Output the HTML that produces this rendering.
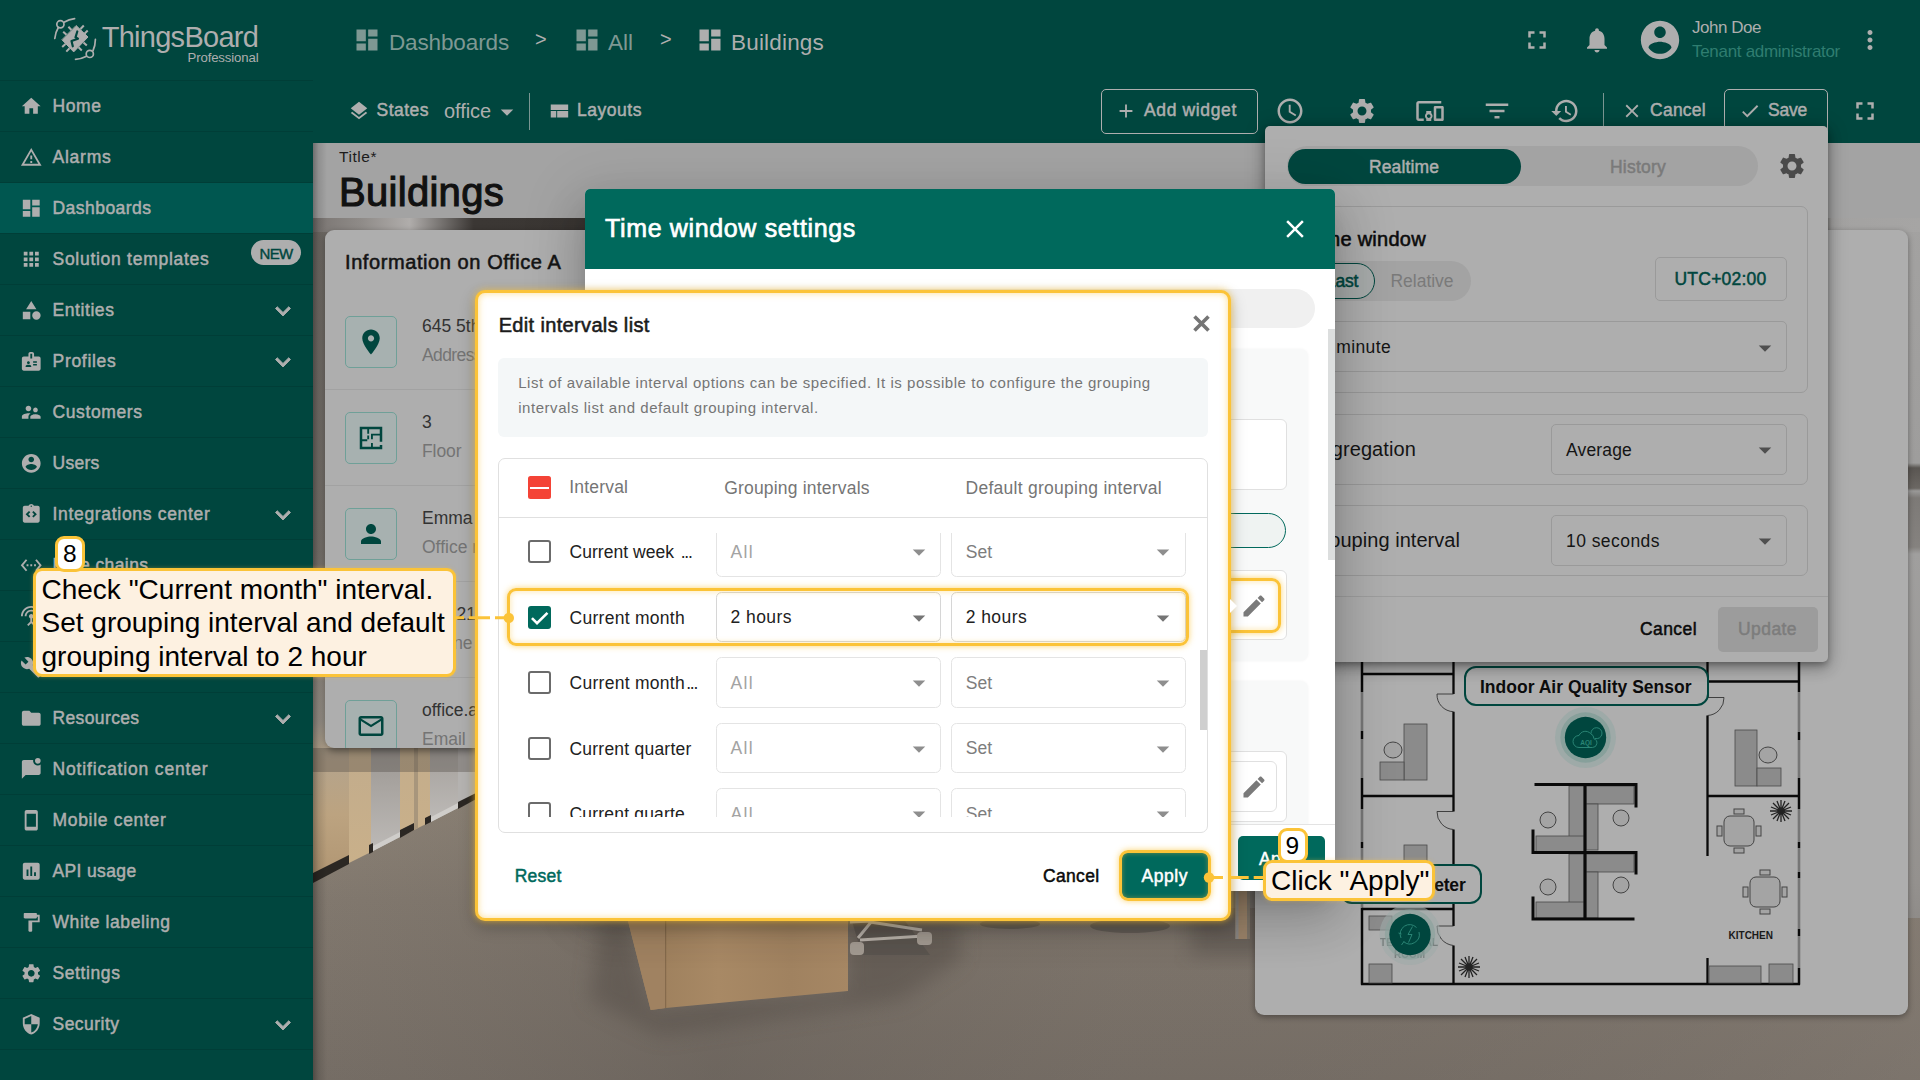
<!DOCTYPE html>
<html lang="en"><head><meta charset="utf-8"><title>Buildings</title>
<style>
*{box-sizing:border-box}
html,body{margin:0;padding:0}
body{width:1920px;height:1080px;overflow:hidden;position:relative;background:#00463e;font-family:"Liberation Sans",sans-serif;color:#aeaeae}
.abs{position:absolute}
.m{-webkit-text-stroke:.45px currentColor}
.t{position:absolute;white-space:nowrap;line-height:1;transform-origin:0 50%}
svg{display:block}
/* sidebar */
#side{position:absolute;left:0;top:0;width:313px;height:1080px;background:#00463e}
.mi{position:absolute;left:0;width:313px;height:51px;border-top:1px solid #003e37}
.mi svg{position:absolute;left:19px;top:13px;width:25px;height:25px;fill:#aeaeae}
.mi span{position:absolute;left:52.500px;top:15px;font-size:17.500px;line-height:20px;letter-spacing:.35px;white-space:nowrap;color:#aeaeae;-webkit-text-stroke:.4px #aeaeae}
.mi svg.ch{left:auto;right:17px;top:10px;width:30px;height:30px}
.mi.act{background:#005750}
/* top */
#top{position:absolute;left:313px;top:0;width:1607px;height:143px;background:#00463e}
.bc{position:absolute;top:30.500px;font-size:22.500px;line-height:24px;color:#8fa9a5;white-space:nowrap}
.ic{position:absolute;fill:#aeaeae}
.tb{position:absolute;font-size:17.500px;line-height:20px;letter-spacing:.4px;white-space:nowrap;color:#aeaeae;-webkit-text-stroke:.4px #aeaeae}
</style></head><body>

<div id="side">
<svg class="abs" style="left:45px;top:8px;width:70px;height:64px" viewBox="45 8 70 64" fill="none" stroke="#aeaeae" stroke-width="1.700" stroke-linecap="round">
<circle cx="60.400" cy="24.300" r="3.600"/><circle cx="89.800" cy="53.900" r="3.600"/>
<path d="M64 22.200Q69 19.400 74.600 18.700"/><path d="M58.300 27.500Q55.300 32.500 54.800 38.500"/>
<path d="M93 50.600Q95.300 45.500 95.400 39.400"/><path d="M86.600 56.300Q81.500 59 75.500 59.300"/>
<polygon points="76.400,25.800 88,37 73.700,51.900 62.200,40" fill="#aeaeae" stroke="#aeaeae" stroke-width="1" stroke-linejoin="round"/>
<g stroke-width="2" stroke-linecap="butt"><path d="M68.400 26.700L71.500 30M63.200 31.700L66.500 34.800M83.800 25.500L80.500 29M87.700 30.500L84.500 33.700M62.200 47.100L65.500 44M66.300 51.600L69.500 48.300M86.800 45.600L83.500 42.500M81.800 50.400L78.500 47.300"/></g>
<path d="M77.300 31.500L75.500 37.300L78 38.800L71.500 41L72.800 46.300" stroke="#00463e" stroke-width="2.200" stroke-linejoin="round"/>
</svg>
<span id="t1" class="t" style="left:101.7px;top:20.43px;font-size:29px;line-height:34.8px;color:#aeaeae;letter-spacing:-0.722px;">ThingsBoard</span>
<span id="t2" class="t" style="left:187.5px;top:50.33px;font-size:13.2px;line-height:15.84px;color:#aeaeae;letter-spacing:-0.132px;">Professional</span>
<div class="mi" style="top:80px"></div>
<svg class="ic" style="left:20px;top:94.7px;width:22.5px;height:22.5px;fill:#aeaeae;" viewBox="0 0 24 24"><path d="M10 20v-6h4v6h5v-8h3L12 3 2 12h3v8z"/></svg>
<span id="t3" class="t" style="left:52.5px;top:96.1px;font-size:17.5px;line-height:21.0px;color:#aeaeae;letter-spacing:0.578px;-webkit-text-stroke:0.49px #aeaeae;">Home</span>
<div class="mi" style="top:131px"></div>
<svg class="ic" style="left:20px;top:145.7px;width:22.5px;height:22.5px;fill:#aeaeae;" viewBox="0 0 24 24"><path d="M12 5.990L19.530 19H4.470L12 5.990M12 2L1 21h22L12 2zm1 14h-2v2h2v-2zm0-6h-2v4h2v-4z"/></svg>
<span id="t4" class="t" style="left:52.5px;top:147.1px;font-size:17.5px;line-height:21.0px;color:#aeaeae;letter-spacing:0.758px;-webkit-text-stroke:0.49px #aeaeae;">Alarms</span>
<div class="mi act" style="top:182px"></div>
<svg class="ic" style="left:20px;top:196.7px;width:22.5px;height:22.5px;fill:#aeaeae;" viewBox="0 0 24 24"><path d="M3 13h8V3H3v10zm0 8h8v-6H3v6zm10 0h8V11h-8v10zm0-18v6h8V3h-8z"/></svg>
<span id="t5" class="t" style="left:52.5px;top:198.1px;font-size:17.5px;line-height:21.0px;color:#aeaeae;letter-spacing:0.463px;-webkit-text-stroke:0.49px #aeaeae;">Dashboards</span>
<div class="mi" style="top:233px"></div>
<svg class="ic" style="left:20px;top:247.7px;width:22.5px;height:22.5px;fill:#aeaeae;" viewBox="0 0 24 24"><path d="M4 8h4V4H4v4zm6 12h4v-4h-4v4zm-6 0h4v-4H4v4zm0-6h4v-4H4v4zm6 0h4v-4h-4v4zm6-10v4h4V4h-4zm-6 4h4V4h-4v4zm6 6h4v-4h-4v4zm0 6h4v-4h-4v4z"/></svg>
<span id="t6" class="t" style="left:52.5px;top:249.1px;font-size:17.5px;line-height:21.0px;color:#aeaeae;letter-spacing:0.723px;-webkit-text-stroke:0.49px #aeaeae;">Solution templates</span>
<div class="mi" style="top:284px"></div>
<svg class="ic" style="left:20px;top:298.7px;width:22.5px;height:22.5px;fill:#aeaeae;" viewBox="0 0 24 24"><path d="M12 2l-5.500 9h11zM17.500 13a4.500 4.500 0 1 0 0 9a4.500 4.500 0 1 0 0-9zM3 13.500h8v8H3z"/></svg>
<span id="t7" class="t" style="left:52.5px;top:300.1px;font-size:17.5px;line-height:21.0px;color:#aeaeae;letter-spacing:0.576px;-webkit-text-stroke:0.49px #aeaeae;">Entities</span>
<svg class="ic" style="left:268px;top:295.5px;width:30px;height:30px;fill:#aeaeae;stroke:#aeaeae;stroke-width:.7px;" viewBox="0 0 24 24"><path d="M16.590 8.590L12 13.170 7.410 8.590 6 10l6 6 6-6z"/></svg>
<div class="mi" style="top:335px"></div>
<svg class="ic" style="left:20px;top:349.7px;width:22.5px;height:22.5px;fill:#aeaeae;" viewBox="0 0 24 24"><path d="M20 7h-5V4c0-1.100-.9-2-2-2h-2c-1.100 0-2 .9-2 2v3H4c-1.100 0-2 .9-2 2v11c0 1.100.9 2 2 2h16c1.100 0 2-.9 2-2V9c0-1.100-.9-2-2-2zM9 12c.830 0 1.500.670 1.500 1.500S9.830 15 9 15s-1.500-.670-1.500-1.500S8.170 12 9 12zm3 6H6v-.750c0-1 2-1.500 3-1.500s3 .5 3 1.500V18zm1-9h-2V4h2v5zm5 7.500h-4V15h4v1.500zm0-3h-4V12h4v1.500z"/></svg>
<span id="t8" class="t" style="left:52.5px;top:351.1px;font-size:17.5px;line-height:21.0px;color:#aeaeae;letter-spacing:0.705px;-webkit-text-stroke:0.49px #aeaeae;">Profiles</span>
<svg class="ic" style="left:268px;top:346.5px;width:30px;height:30px;fill:#aeaeae;stroke:#aeaeae;stroke-width:.7px;" viewBox="0 0 24 24"><path d="M16.590 8.590L12 13.170 7.410 8.590 6 10l6 6 6-6z"/></svg>
<div class="mi" style="top:386px"></div>
<svg class="ic" style="left:20px;top:400.7px;width:22.5px;height:22.5px;fill:#aeaeae;" viewBox="0 0 24 24"><path d="M16.500 12c1.380 0 2.490-1.120 2.490-2.500S17.880 7 16.500 7C15.120 7 14 8.120 14 9.500s1.120 2.500 2.500 2.500zM9 11c1.660 0 2.990-1.340 2.990-3S10.660 5 9 5C7.340 5 6 6.340 6 8s1.340 3 3 3zm7.500 3c-1.830 0-5.500.920-5.500 2.750V19h11v-2.250c0-1.830-3.670-2.750-5.500-2.750zM9 13c-2.330 0-7 1.170-7 3.500V19h7v-2.250c0-.850.330-2.340 2.370-3.470C10.500 13.100 9.660 13 9 13z"/></svg>
<span id="t9" class="t" style="left:52.5px;top:402.1px;font-size:17.5px;line-height:21.0px;color:#aeaeae;letter-spacing:0.599px;-webkit-text-stroke:0.49px #aeaeae;">Customers</span>
<div class="mi" style="top:437px"></div>
<svg class="ic" style="left:20px;top:451.7px;width:22.5px;height:22.5px;fill:#aeaeae;" viewBox="0 0 24 24"><path d="M12 2C6.480 2 2 6.480 2 12s4.480 10 10 10 10-4.480 10-10S17.520 2 12 2zm0 3c1.660 0 3 1.340 3 3s-1.340 3-3 3-3-1.340-3-3 1.340-3 3-3zm0 14.200c-2.500 0-4.710-1.280-6-3.220.030-1.990 4-3.080 6-3.080 1.990 0 5.970 1.090 6 3.080-1.290 1.940-3.500 3.220-6 3.220z"/></svg>
<span id="t10" class="t" style="left:52.5px;top:453.1px;font-size:17.5px;line-height:21.0px;color:#aeaeae;letter-spacing:0.259px;-webkit-text-stroke:0.49px #aeaeae;">Users</span>
<div class="mi" style="top:488px"></div>
<svg class="ic" style="left:20px;top:502.7px;width:22.5px;height:22.5px;fill:#aeaeae;" viewBox="0 0 24 24"><path d="M19 3h-4.180C14.400 1.840 13.300 1 12 1s-2.400.840-2.820 2H5c-1.100 0-2 .9-2 2v14c0 1.100.9 2 2 2h14c1.100 0 2-.9 2-2V5c0-1.100-.9-2-2-2zm-8 11.170l-1.410 1.420L6 12l3.590-3.590L11 9.830 8.830 12 11 14.170zm1-9.920c-.410 0-.750-.340-.750-.750s.340-.750.750-.750.750.340.750.750-.340.750-.750.750zm2.410 11.340L13 14.170 15.170 12 13 9.830l1.410-1.420L18 12l-3.590 3.590z"/></svg>
<span id="t11" class="t" style="left:52.5px;top:504.1px;font-size:17.5px;line-height:21.0px;color:#aeaeae;letter-spacing:0.687px;-webkit-text-stroke:0.49px #aeaeae;">Integrations center</span>
<svg class="ic" style="left:268px;top:499.5px;width:30px;height:30px;fill:#aeaeae;stroke:#aeaeae;stroke-width:.7px;" viewBox="0 0 24 24"><path d="M16.590 8.590L12 13.170 7.410 8.590 6 10l6 6 6-6z"/></svg>
<div class="mi" style="top:539px"></div>
<svg class="ic" style="left:20px;top:553.7px;width:22.5px;height:22.5px;fill:#aeaeae;" viewBox="0 0 24 24"><path d="M7.770 6.760L6.230 5.480.820 12l5.410 6.520 1.540-1.280L3.420 12l4.350-5.240zM7 13h2v-2H7v2zm10-2h-2v2h2v-2zm-6 2h2v-2h-2v2zm6.770-7.520l-1.540 1.280L20.580 12l-4.350 5.240 1.540 1.280L23.180 12l-5.410-6.520z"/></svg>
<span id="t12" class="t" style="left:52.5px;top:555.1px;font-size:17.5px;line-height:21.0px;color:#aeaeae;letter-spacing:0.413px;-webkit-text-stroke:0.49px #aeaeae;">Rule chains</span>
<div class="mi" style="top:590px"></div>
<svg class="ic" style="left:20px;top:604.7px;width:22.5px;height:22.5px;fill:#aeaeae;" viewBox="0 0 24 24"><path d="M12 5c-3.870 0-7 3.130-7 7h2c0-2.760 2.240-5 5-5s5 2.240 5 5h2c0-3.870-3.130-7-7-7zm1 9.290c.880-.390 1.500-1.260 1.500-2.290 0-1.380-1.120-2.500-2.500-2.500S9.500 10.620 9.500 12c0 1.020.620 1.900 1.500 2.290v3.300L7.590 21 9 22.410l3-3 3 3L16.410 21 13 17.590v-3.300zM12 1C5.930 1 1 5.930 1 12h2c0-4.970 4.030-9 9-9s9 4.030 9 9h2c0-6.070-4.930-11-11-11z"/></svg>
<span id="t13" class="t" style="left:52.5px;top:606.1px;font-size:17.5px;line-height:21.0px;color:#aeaeae;letter-spacing:-0.526px;-webkit-text-stroke:0.49px #aeaeae;">Edge management</span>
<svg class="ic" style="left:268px;top:601.5px;width:30px;height:30px;fill:#aeaeae;stroke:#aeaeae;stroke-width:.7px;" viewBox="0 0 24 24"><path d="M16.590 8.590L12 13.170 7.410 8.590 6 10l6 6 6-6z"/></svg>
<div class="mi" style="top:641px"></div>
<svg class="ic" style="left:20px;top:655.7px;width:22.5px;height:22.5px;fill:#aeaeae;" viewBox="0 0 24 24"><path d="M22.700 19l-9.100-9.100c.9-2.300.4-5-1.500-6.900-2-2-5-2.400-7.400-1.300L9 6 6 9 1.600 4.700C.4 7.100.9 10.100 2.900 12.100c1.900 1.900 4.600 2.400 6.900 1.500l9.100 9.100c.4.400 1 .4 1.400 0l2.300-2.300c.5-.4.500-1.100.1-1.400z"/></svg>
<span id="t14" class="t" style="left:52.5px;top:657.1px;font-size:17.5px;line-height:21.0px;color:#aeaeae;letter-spacing:0.239px;-webkit-text-stroke:0.49px #aeaeae;">Advanced features</span>
<svg class="ic" style="left:268px;top:652.5px;width:30px;height:30px;fill:#aeaeae;stroke:#aeaeae;stroke-width:.7px;" viewBox="0 0 24 24"><path d="M16.590 8.590L12 13.170 7.410 8.590 6 10l6 6 6-6z"/></svg>
<div class="mi" style="top:692px"></div>
<svg class="ic" style="left:20px;top:706.7px;width:22.5px;height:22.5px;fill:#aeaeae;" viewBox="0 0 24 24"><path d="M10 4H4c-1.100 0-1.990.9-1.990 2L2 18c0 1.100.9 2 2 2h16c1.100 0 2-.9 2-2V8c0-1.100-.9-2-2-2h-8l-2-2z"/></svg>
<span id="t15" class="t" style="left:52.5px;top:708.1px;font-size:17.5px;line-height:21.0px;color:#aeaeae;letter-spacing:0.372px;-webkit-text-stroke:0.49px #aeaeae;">Resources</span>
<svg class="ic" style="left:268px;top:703.5px;width:30px;height:30px;fill:#aeaeae;stroke:#aeaeae;stroke-width:.7px;" viewBox="0 0 24 24"><path d="M16.590 8.590L12 13.170 7.410 8.590 6 10l6 6 6-6z"/></svg>
<div class="mi" style="top:743px"></div>
<svg class="ic" style="left:20px;top:757.7px;width:22.5px;height:22.5px;fill:#aeaeae;" viewBox="0 0 24 24"><path d="M22 6.980V16c0 1.100-.9 2-2 2H6l-4 4V4c0-1.100.9-2 2-2h10.100c-.060.320-.100.660-.100 1 0 2.760 2.240 5 5 5 1.130 0 2.160-.390 3-1.020zM16 3a3 3 0 1 0 6 0a3 3 0 1 0-6 0z"/></svg>
<span id="t16" class="t" style="left:52.5px;top:759.1px;font-size:17.5px;line-height:21.0px;color:#aeaeae;letter-spacing:0.838px;-webkit-text-stroke:0.49px #aeaeae;">Notification center</span>
<div class="mi" style="top:794px"></div>
<svg class="ic" style="left:20px;top:808.7px;width:22.5px;height:22.5px;fill:#aeaeae;" viewBox="0 0 24 24"><path d="M17 1.010L7 1c-1.100 0-2 .9-2 2v18c0 1.100.9 2 2 2h10c1.100 0 2-.9 2-2V3c0-1.100-.9-1.990-2-1.990zM17 19H7V5h10v14z"/></svg>
<span id="t17" class="t" style="left:52.5px;top:810.1px;font-size:17.5px;line-height:21.0px;color:#aeaeae;letter-spacing:0.688px;-webkit-text-stroke:0.49px #aeaeae;">Mobile center</span>
<div class="mi" style="top:845px"></div>
<svg class="ic" style="left:20px;top:859.7px;width:22.5px;height:22.5px;fill:#aeaeae;" viewBox="0 0 24 24"><path d="M19 3H5c-1.100 0-2 .9-2 2v14c0 1.100.9 2 2 2h14c1.100 0 2-.9 2-2V5c0-1.100-.9-2-2-2zM9 17H7v-7h2v7zm4 0h-2V7h2v10zm4 0h-2v-4h2v4z"/></svg>
<span id="t18" class="t" style="left:52.5px;top:861.1px;font-size:17.5px;line-height:21.0px;color:#aeaeae;letter-spacing:0.361px;-webkit-text-stroke:0.49px #aeaeae;">API usage</span>
<div class="mi" style="top:896px"></div>
<svg class="ic" style="left:20px;top:910.7px;width:22.5px;height:22.5px;fill:#aeaeae;" viewBox="0 0 24 24"><path d="M18 4V3c0-.550-.450-1-1-1H5c-.550 0-1 .450-1 1v4c0 .550.450 1 1 1h12c.550 0 1-.450 1-1V6h1v4H9v11c0 .550.450 1 1 1h2c.550 0 1-.450 1-1v-9h8V4h-3z"/></svg>
<span id="t19" class="t" style="left:52.5px;top:912.1px;font-size:17.5px;line-height:21.0px;color:#aeaeae;letter-spacing:0.577px;-webkit-text-stroke:0.49px #aeaeae;">White labeling</span>
<div class="mi" style="top:947px"></div>
<svg class="ic" style="left:20px;top:961.7px;width:22.5px;height:22.5px;fill:#aeaeae;" viewBox="0 0 24 24"><path d="M19.140 12.940c.040-.300.060-.610.060-.940 0-.320-.020-.640-.070-.940l2.030-1.580c.180-.140.230-.410.120-.610l-1.920-3.320c-.120-.220-.370-.290-.590-.220l-2.390.960c-.500-.380-1.030-.700-1.620-.940l-.360-2.540c-.040-.240-.240-.410-.480-.410h-3.840c-.240 0-.430.170-.470.410l-.360 2.540c-.590.240-1.130.570-1.620.940l-2.390-.960c-.220-.080-.470 0-.590.220L2.740 8.870c-.120.210-.080.470.120.610l2.030 1.580c-.050.300-.090.630-.090.940s.020.640.070.940l-2.030 1.580c-.180.140-.230.410-.120.610l1.920 3.320c.120.220.370.290.590.220l2.390-.960c.500.380 1.030.700 1.620.940l.360 2.540c.050.240.240.410.480.410h3.840c.240 0 .440-.170.470-.410l.360-2.540c.590-.240 1.130-.560 1.620-.940l2.390.960c.220.080.470 0 .590-.220l1.920-3.320c.120-.220.070-.470-.120-.610l-2.010-1.580zM12 15.600c-1.980 0-3.600-1.620-3.600-3.600s1.620-3.600 3.600-3.600 3.600 1.620 3.600 3.600-1.620 3.600-3.600 3.600z"/></svg>
<span id="t20" class="t" style="left:52.5px;top:963.1px;font-size:17.5px;line-height:21.0px;color:#aeaeae;letter-spacing:0.596px;-webkit-text-stroke:0.49px #aeaeae;">Settings</span>
<div class="mi" style="top:998px"></div>
<svg class="ic" style="left:20px;top:1012.7px;width:22.5px;height:22.5px;fill:#aeaeae;" viewBox="0 0 24 24"><path d="M12 1L3 5v6c0 5.550 3.840 10.740 9 12 5.160-1.260 9-6.450 9-12V5l-9-4zm0 10.990h7c-.530 4.120-3.280 7.790-7 8.940V12H5V6.300l7-3.110v8.800z"/></svg>
<span id="t21" class="t" style="left:52.5px;top:1014.1px;font-size:17.5px;line-height:21.0px;color:#aeaeae;letter-spacing:0.473px;-webkit-text-stroke:0.49px #aeaeae;">Security</span>
<svg class="ic" style="left:268px;top:1009.5px;width:30px;height:30px;fill:#aeaeae;stroke:#aeaeae;stroke-width:.7px;" viewBox="0 0 24 24"><path d="M16.590 8.590L12 13.170 7.410 8.590 6 10l6 6 6-6z"/></svg>
<div class="abs" style="left:0;top:1049px;width:313px;height:1px;background:#003e37"></div>
<div class="abs" style="left:251px;top:239.500px;width:50px;height:25.500px;border-radius:13px;background:#aeaeae"></div>
<span id="t22" class="t" style="left:259.5px;top:244.57px;font-size:15px;line-height:18.0px;color:#00463e;letter-spacing:-0.667px;-webkit-text-stroke:0.42px #00463e;">NEW</span>
</div>
<div id="top"></div>
<svg class="ic" style="left:353px;top:25.5px;width:28px;height:28px;fill:#7e9893;" viewBox="0 0 24 24"><path d="M3 13h8V3H3v10zm0 8h8v-6H3v6zm10 0h8V11h-8v10zm0-18v6h8V3h-8z"/></svg>
<span id="t23" class="t" style="left:389px;top:28.96px;font-size:22.5px;line-height:27.0px;color:#7e9893;letter-spacing:-0.133px;">Dashboards</span>
<span id="t24" class="t" style="left:535px;top:26.93px;font-size:20px;line-height:24.0px;color:#aeaeae;">&gt;</span>
<svg class="ic" style="left:572.5px;top:25.5px;width:28px;height:28px;fill:#7e9893;" viewBox="0 0 24 24"><path d="M3 13h8V3H3v10zm0 8h8v-6H3v6zm10 0h8V11h-8v10zm0-18v6h8V3h-8z"/></svg>
<span id="t25" class="t" style="left:608px;top:28.96px;font-size:22.5px;line-height:27.0px;color:#7e9893;letter-spacing:-0.005px;">All</span>
<span id="t26" class="t" style="left:660px;top:26.93px;font-size:20px;line-height:24.0px;color:#aeaeae;">&gt;</span>
<svg class="ic" style="left:696px;top:25.5px;width:28px;height:28px;fill:#aeaeae;" viewBox="0 0 24 24"><path d="M3 13h8V3H3v10zm0 8h8v-6H3v6zm10 0h8V11h-8v10zm0-18v6h8V3h-8z"/></svg>
<span id="t27" class="t" style="left:731px;top:28.96px;font-size:22.5px;line-height:27.0px;color:#aeaeae;letter-spacing:0.188px;">Buildings</span>
<svg class="ic" style="left:1522px;top:25px;width:30px;height:30px;fill:#aeaeae;" viewBox="0 0 24 24"><path d="M7 14H5v5h5v-2H7v-3zm-2-4h2V7h3V5H5v5zm12 7h-3v2h5v-5h-2v3zM14 5v2h3v3h2V5h-5z"/></svg>
<svg class="ic" style="left:1582px;top:25px;width:30px;height:30px;fill:#aeaeae;" viewBox="0 0 24 24"><path d="M12 22c1.100 0 2-.9 2-2h-4c0 1.100.890 2 2 2zm6-6v-5c0-3.070-1.640-5.640-4.500-6.320V4c0-.830-.670-1.500-1.500-1.500s-1.500.670-1.500 1.500v.680C7.630 5.360 6 7.920 6 11v5l-2 2v1h16v-1l-2-2z"/></svg>
<svg class="ic" style="left:1637px;top:17px;width:46px;height:46px;fill:#aeaeae;" viewBox="0 0 24 24"><path d="M12 2C6.480 2 2 6.480 2 12s4.480 10 10 10 10-4.480 10-10S17.520 2 12 2zm0 3c1.660 0 3 1.340 3 3s-1.340 3-3 3-3-1.340-3-3 1.340-3 3-3zm0 14.200c-2.500 0-4.710-1.280-6-3.220.030-1.990 4-3.080 6-3.080 1.990 0 5.970 1.090 6 3.080-1.290 1.940-3.500 3.220-6 3.220z"/></svg>
<span id="t28" class="t" style="left:1692px;top:17.9px;font-size:17px;line-height:20.4px;color:#aeaeae;letter-spacing:-0.473px;">John Doe</span>
<span id="t29" class="t" style="left:1692px;top:41.9px;font-size:17px;line-height:20.4px;color:#2f7d70;letter-spacing:-0.302px;">Tenant administrator</span>
<svg class="ic" style="left:1855px;top:25px;width:30px;height:30px;fill:#aeaeae;" viewBox="0 0 24 24"><path d="M12 8c1.100 0 2-.9 2-2s-.9-2-2-2-2 .9-2 2 .9 2 2 2zm0 2c-1.100 0-2 .9-2 2s.9 2 2 2 2-.9 2-2-.9-2-2-2zm0 6c-1.100 0-2 .9-2 2s.9 2 2 2 2-.9 2-2-.9-2-2-2z"/></svg>
<svg class="ic" style="left:348px;top:99.5px;width:22px;height:22px;fill:#aeaeae;" viewBox="0 0 24 24"><path d="M11.990 18.540l-7.370-5.730L3 14.070l9 7 9-7-1.630-1.270-7.380 5.740zM12 16l7.360-5.730L21 9l-9-7-9 7 1.630 1.270L12 16z"/></svg>
<span id="t30" class="t" style="left:376.5px;top:100.4px;font-size:17.5px;line-height:21.0px;color:#aeaeae;letter-spacing:0.479px;-webkit-text-stroke:0.49px #aeaeae;">States</span>
<span id="t31" class="t" style="left:444px;top:99.43px;font-size:20px;line-height:24.0px;color:#aeaeae;letter-spacing:-0.076px;">office</span>
<svg class="ic" style="left:492px;top:97px;width:30px;height:30px;fill:#aeaeae;" viewBox="0 0 24 24"><path d="M7 10l5 5 5-5z"/></svg>
<div class="abs" style="left:529px;top:93px;width:1px;height:37px;background:#7a9692"></div>
<svg class="ic" style="left:548px;top:99.5px;width:22px;height:22px;fill:#aeaeae;" viewBox="0 0 24 24"><path d="M3 19h6v-7H3v7zm7 0h12v-7H10v7zM3 5v6h19V5H3z"/></svg>
<span id="t32" class="t" style="left:577px;top:100.4px;font-size:17.5px;line-height:21.0px;color:#aeaeae;letter-spacing:0.529px;-webkit-text-stroke:0.49px #aeaeae;">Layouts</span>
<div class="abs" style="left:1101px;top:88.700px;width:156.500px;height:45px;border:1px solid #aeaeae;border-radius:5px"></div>
<svg class="ic" style="left:1115px;top:100px;width:22px;height:22px;fill:#aeaeae;" viewBox="0 0 24 24"><path d="M19 13h-6v6h-2v-6H5v-2h6V5h2v6h6v2z"/></svg>
<span id="t33" class="t" style="left:1144px;top:100.4px;font-size:17.5px;line-height:21.0px;color:#aeaeae;letter-spacing:0.641px;-webkit-text-stroke:0.49px #aeaeae;">Add widget</span>
<svg class="ic" style="left:1275px;top:96px;width:30px;height:30px;fill:#aeaeae;" viewBox="0 0 24 24"><path d="M11.990 2C6.470 2 2 6.480 2 12s4.470 10 9.990 10C17.520 22 22 17.520 22 12S17.520 2 11.990 2zM12 20c-4.420 0-8-3.580-8-8s3.580-8 8-8 8 3.580 8 8-3.580 8-8 8zm.5-13H11v6l5.250 3.150.750-1.230-4.500-2.670z"/></svg>
<svg class="ic" style="left:1347px;top:96px;width:30px;height:30px;fill:#aeaeae;" viewBox="0 0 24 24"><path d="M19.140 12.940c.040-.300.060-.610.060-.940 0-.320-.020-.640-.070-.940l2.030-1.580c.180-.140.230-.410.120-.610l-1.920-3.320c-.120-.220-.370-.290-.590-.220l-2.390.960c-.500-.380-1.030-.700-1.620-.940l-.360-2.540c-.040-.240-.240-.410-.480-.410h-3.840c-.240 0-.430.170-.470.410l-.360 2.540c-.590.240-1.130.570-1.620.940l-2.390-.960c-.220-.080-.470 0-.590.220L2.740 8.870c-.120.210-.080.470.120.610l2.030 1.580c-.050.300-.090.630-.090.940s.020.640.070.940l-2.030 1.580c-.180.140-.230.410-.120.610l1.920 3.320c.120.220.370.290.590.220l2.390-.960c.500.380 1.030.700 1.620.940l.360 2.540c.050.240.240.410.480.410h3.840c.240 0 .440-.170.470-.410l.360-2.540c.590-.240 1.130-.560 1.620-.940l2.390.960c.220.080.470 0 .590-.220l1.920-3.320c.120-.220.070-.470-.120-.610l-2.010-1.580zM12 15.600c-1.980 0-3.600-1.620-3.600-3.600s1.620-3.600 3.600-3.600 3.600 1.620 3.600 3.600-1.620 3.600-3.600 3.600z"/></svg>
<svg class="ic" style="left:1415px;top:96px;width:30px;height:30px;fill:#aeaeae;" viewBox="0 0 24 24"><path d="M3 6h18V4H3c-1.100 0-2 .9-2 2v12c0 1.100.9 2 2 2h4v-2H3V6zm10 6H9v1.780c-.610.550-1 1.330-1 2.220s.390 1.670 1 2.220V20h4v-1.780c.610-.550 1-1.340 1-2.220s-.390-1.670-1-2.220V12zm-2 5.500c-.830 0-1.500-.670-1.500-1.500s.670-1.500 1.500-1.500 1.500.670 1.500 1.500-.670 1.500-1.500 1.500zM22 8h-6c-.500 0-1 .500-1 1v10c0 .500.500 1 1 1h6c.500 0 1-.500 1-1V9c0-.500-.500-1-1-1zm-1 10h-4v-8h4v8z"/></svg>
<svg class="ic" style="left:1482px;top:96px;width:30px;height:30px;fill:#aeaeae;" viewBox="0 0 24 24"><path d="M10 18h4v-2h-4v2zM3 6v2h18V6H3zm3 7h12v-2H6v2z"/></svg>
<svg class="ic" style="left:1550px;top:96px;width:30px;height:30px;fill:#aeaeae;" viewBox="0 0 24 24"><path d="M13 3c-4.970 0-9 4.030-9 9H1l3.890 3.890.070.140L9 12H6c0-3.870 3.130-7 7-7s7 3.130 7 7-3.130 7-7 7c-1.930 0-3.680-.790-4.940-2.060l-1.420 1.420C8.270 19.990 10.510 21 13 21c4.970 0 9-4.030 9-9s-4.030-9-9-9zm-1 5v5l4.280 2.540.720-1.210-3.500-2.080V8H12z"/></svg>
<div class="abs" style="left:1603px;top:93px;width:1px;height:37px;background:#7a9692"></div>
<svg class="ic" style="left:1621px;top:100px;width:22px;height:22px;fill:#aeaeae;" viewBox="0 0 24 24"><path d="M19 6.410L17.590 5 12 10.590 6.410 5 5 6.410 10.590 12 5 17.590 6.410 19 12 13.410 17.590 19 19 17.590 13.410 12z"/></svg>
<span id="t34" class="t" style="left:1650px;top:100.4px;font-size:17.5px;line-height:21.0px;color:#aeaeae;letter-spacing:0.253px;-webkit-text-stroke:0.49px #aeaeae;">Cancel</span>
<div class="abs" style="left:1724px;top:88.700px;width:104px;height:45px;border:1px solid #aeaeae;border-radius:5px"></div>
<svg class="ic" style="left:1739px;top:100px;width:22px;height:22px;fill:#aeaeae;" viewBox="0 0 24 24"><path d="M9 16.170L4.830 12l-1.420 1.410L9 19 21 7l-1.410-1.410z"/></svg>
<span id="t35" class="t" style="left:1768px;top:100.4px;font-size:17.5px;line-height:21.0px;color:#aeaeae;letter-spacing:-0.223px;-webkit-text-stroke:0.49px #aeaeae;">Save</span>
<svg class="ic" style="left:1850px;top:96px;width:30px;height:30px;fill:#aeaeae;" viewBox="0 0 24 24"><path d="M7 14H5v5h5v-2H7v-3zm-2-4h2V7h3V5H5v5zm12 7h-3v2h5v-5h-2v3zM14 5v2h3v3h2V5h-5z"/></svg>
<!-- main dashboard area -->
<div id="main" class="abs" style="left:313px;top:143px;width:1607px;height:937px;overflow:hidden;background:#7b736b">
<svg class="abs" style="left:0;top:0" width="1607" height="937" viewBox="313 143 1607 937">
<defs>
<linearGradient id="flr" gradientUnits="userSpaceOnUse" x1="0" y1="780" x2="0" y2="1080"><stop offset="0" stop-color="#8f8578"/><stop offset=".4" stop-color="#81786e"/><stop offset="1" stop-color="#756d65"/></linearGradient>
<linearGradient id="flr2" x1="0" y1="0" x2="1" y2="0"><stop offset="0" stop-color="#6a625b" stop-opacity=".0"/><stop offset=".25" stop-color="#5f5852" stop-opacity=".35"/><stop offset=".5" stop-color="#6a625b" stop-opacity=".1"/><stop offset="1" stop-color="#8a827a" stop-opacity=".35"/></linearGradient>
<linearGradient id="ceil" x1="0" y1="0" x2="1" y2="0"><stop offset="0" stop-color="#797471"/><stop offset=".03" stop-color="#8f8b88"/><stop offset=".06" stop-color="#b0adab"/><stop offset=".1" stop-color="#3b3734"/><stop offset=".6" stop-color="#35312d"/><stop offset=".935" stop-color="#4a4541"/><stop offset=".945" stop-color="#a3a2a1"/><stop offset="1" stop-color="#a6a5a4"/></linearGradient>
<linearGradient id="wood" x1="0" y1="0" x2="1" y2="0"><stop offset="0" stop-color="#a38563"/><stop offset=".2" stop-color="#a98a66"/><stop offset=".35" stop-color="#9f815e"/><stop offset=".55" stop-color="#a88965"/><stop offset=".8" stop-color="#a08260"/><stop offset="1" stop-color="#a68764"/></linearGradient>
<linearGradient id="wp" x1="0" y1="0" x2="0" y2="1"><stop offset="0" stop-color="#6f6a65"/><stop offset=".5" stop-color="#7a746e"/><stop offset=".76" stop-color="#9a938a"/><stop offset=".8" stop-color="#b3a48e"/><stop offset=".9" stop-color="#bca380"/><stop offset="1" stop-color="#b09572"/></linearGradient>
<linearGradient id="wp2" x1="0" y1="0" x2="0" y2="1"><stop offset="0" stop-color="#908b85"/><stop offset=".75" stop-color="#a39b90"/><stop offset=".82" stop-color="#c2ac8c"/><stop offset="1" stop-color="#c9b08a"/></linearGradient>
<linearGradient id="bl" x1="0" y1="0" x2="0" y2="1"><stop offset="0" stop-color="#8c8782"/><stop offset=".78" stop-color="#8f8a86"/><stop offset=".9" stop-color="#a9a5a1"/><stop offset="1" stop-color="#bdbab7"/></linearGradient>
<linearGradient id="rt" x1="0" y1="0" x2="0" y2="1"><stop offset="0" stop-color="#a3a2a1"/><stop offset=".35" stop-color="#9e9d9c"/><stop offset=".357" stop-color="#5a5652"/><stop offset=".386" stop-color="#6b6763"/><stop offset=".39" stop-color="#9a9998"/><stop offset=".40" stop-color="#7d7a77"/><stop offset=".47" stop-color="#85827f"/><stop offset=".48" stop-color="#a09f9e"/><stop offset=".95" stop-color="#94918e"/><stop offset="1" stop-color="#8f8c89"/></linearGradient>
</defs>
<rect x="313" y="143" width="1607" height="937" fill="url(#flr)"/>
<rect x="313" y="700" width="1607" height="380" fill="url(#flr2)"/>
<!-- right wall behind -->
<rect x="1890" y="218" width="30" height="700" fill="url(#rt)"/>

<!-- left wall -->
<polygon points="313,218 349,218 349,863 313,881" fill="url(#wp)"/>
<polygon points="349,218 371,218 371,852 349,863" fill="url(#wp2)"/>
<polygon points="371,218 400,218 400,837 371,852" fill="url(#bl)"/>
<polygon points="400,218 430,218 430,822 400,837" fill="url(#wp2)"/>
<polygon points="414,218 418,218 418,828 414,830" fill="#a8967c"/>
<polygon points="430,218 458,218 458,808 430,822" fill="url(#bl)"/>
<polygon points="458,218 480,218 480,797 458,808" fill="#b5b3b1"/>
<g fill="#2b2723"><polygon points="313,873 349,855 349,864 313,883"/><polygon points="369,845 373,843 373,852 369,854"/><polygon points="400,830 414,823 414,830 400,838"/><polygon points="425,818 431,815 431,822 425,825"/><polygon points="458,802 480,791 480,797 458,809"/></g>
<g fill="#cfcdca"><polygon points="373,846 400,832 400,837 373,851"/><polygon points="431,817 458,803 458,808 431,822"/></g>
<rect x="313" y="748" width="170" height="24" fill="#4a4540" opacity=".35"/>
<!-- far wall behind dialogs -->
<rect x="480" y="218" width="800" height="690" fill="#8c8780"/>
<!-- desk shadow -->
<filter id="bl8" x="-20%" y="-20%" width="140%" height="140%"><feGaussianBlur stdDeviation="10"/></filter><polygon points="600,921 628,921 651,1010 848,991 848,921 960,921 960,960 900,1000 660,1035 590,1000" fill="#544d47" opacity=".5" filter="url(#bl8)"/>
<!-- desk -->
<polygon points="560,905 848,905 848,991 665.700,1008 650.700,1010 628,921" fill="url(#wood)"/>
<polygon points="600,905 665.700,905 665.700,1008 650.700,1010 628,921" fill="#a08261"/>
<path d="M665.700 905V1008" stroke="#7f6648" stroke-width="1"/>
<!-- chair base -->
<polygon points="852,921 905,921 930,955 862,955" fill="#59534d" opacity=".8"/>
<g stroke="#b9b2aa" stroke-width="3" fill="none"><path d="M850 922L872 921L858 938"/><path d="M870 922L922 930"/><path d="M860 940L924 936"/></g>
<rect x="850" y="942" width="14" height="13" rx="4" fill="#a39b92"/><rect x="917" y="932" width="15" height="13" rx="4" fill="#a39b92"/>
<g fill="#5c5650" opacity=".7"><ellipse cx="1010" cy="924" rx="30" ry="5"/><ellipse cx="1130" cy="926" rx="40" ry="7"/></g>
<!-- bottom right floor light -->
<rect x="1190" y="880" width="80" height="75" fill="#4f4944" opacity=".45" filter="url(#bl8)"/><rect x="1235.500" y="870" width="14.500" height="69" fill="#9c846a"/><rect x="1235.500" y="870" width="3" height="69" fill="#8a8784"/><rect x="1247" y="870" width="3" height="69" fill="#7d7468"/>
<!-- ceiling -->
<rect x="313" y="143" width="1607" height="75" fill="#a3a3a3"/>
<rect x="313" y="218" width="1607" height="14" fill="url(#ceil)"/>
</svg>
</div>
<span id="t36" class="t" style="left:339px;top:147.58px;font-size:15.5px;line-height:18.6px;color:#1c1c1c;letter-spacing:0.542px;">Title*</span>
<span id="t37" class="t" style="left:339px;top:167.56px;font-size:40px;line-height:48.0px;color:#111;letter-spacing:0.297px;-webkit-text-stroke:1.12px #111;">Buildings</span>
<div class="abs" style="left:313px;top:143px;width:14px;height:937px;background:linear-gradient(90deg,rgba(0,0,0,.32),rgba(0,0,0,.12) 40%,rgba(0,0,0,0))"></div>
<!-- left card -->
<div class="abs" style="left:0;top:0;width:1920px;height:748px;overflow:hidden;pointer-events:none">
<div class="abs" style="left:325px;top:230px;width:919px;height:518px;background:#aeaeae;border-radius:9px;box-shadow:0 2px 6px rgba(0,0,0,.35)"></div>
<span id="t38" class="t" style="left:345px;top:249.53px;font-size:20px;line-height:24.0px;color:#141414;letter-spacing:0.584px;-webkit-text-stroke:0.56px #141414;">Information on Office A</span>
<div class="abs" style="left:345px;top:316px;width:52px;height:52px;border:1px solid #6fa098;border-radius:5px;background:#a7b1b0"></div><svg class="ic" style="left:356px;top:326.5px;width:30px;height:30px;fill:#00463e;" viewBox="0 0 24 24"><path d="M12 2C8.130 2 5 5.130 5 9c0 5.250 7 13 7 13s7-7.750 7-13c0-3.870-3.130-7-7-7zm0 9.500c-1.380 0-2.500-1.120-2.500-2.500s1.120-2.500 2.500-2.500 2.500 1.120 2.500 2.500-1.120 2.500-2.500 2.500z"/></svg><div class="abs" style="left:325px;top:389px;width:919px;height:1px;background:#a2a2a2"></div><span id="t39" class="t" style="left:422px;top:316.1px;font-size:17.5px;line-height:21.0px;color:#333;">645 5th Ave, New York</span><span id="t40" class="t" style="left:422px;top:345.3px;font-size:17.5px;line-height:21.0px;color:#747474;letter-spacing:-0.6px;">Address</span><div class="abs" style="left:345px;top:412px;width:52px;height:52px;border:1px solid #6fa098;border-radius:5px;background:#a7b1b0"></div><svg class="ic" style="left:356px;top:422.5px;width:30px;height:30px;fill:#00463e;" viewBox="0 0 24 24"><path d="M3 3v18h18v-3.500h-2V19h-5.500v-3H12v3H5v-4.500h4V13H5V5h4v3.500h1.500V5H19v3.500h-7V13h1.500v-3H19v5h2V3H3zM9 10v3h1.500v-3H9z"/></svg><div class="abs" style="left:325px;top:485px;width:919px;height:1px;background:#a2a2a2"></div><span id="t41" class="t" style="left:422px;top:412.1px;font-size:17.5px;line-height:21.0px;color:#333;">3</span><span id="t42" class="t" style="left:422px;top:441.3px;font-size:17.5px;line-height:21.0px;color:#747474;letter-spacing:-0.075px;">Floor</span><div class="abs" style="left:345px;top:508px;width:52px;height:52px;border:1px solid #6fa098;border-radius:5px;background:#a7b1b0"></div><svg class="ic" style="left:356px;top:518.5px;width:30px;height:30px;fill:#00463e;" viewBox="0 0 24 24"><path d="M12 12c2.210 0 4-1.790 4-4s-1.790-4-4-4-4 1.790-4 4 1.790 4 4 4zm0 2c-2.670 0-8 1.340-8 4v2h16v-2c0-2.660-5.330-4-8-4z"/></svg><div class="abs" style="left:325px;top:581px;width:919px;height:1px;background:#a2a2a2"></div><span id="t43" class="t" style="left:422px;top:508.1px;font-size:17.5px;line-height:21.0px;color:#333;">Emma Johnson</span><span id="t44" class="t" style="left:422px;top:537.3px;font-size:17.5px;line-height:21.0px;color:#747474;">Office manager</span><div class="abs" style="left:345px;top:604px;width:52px;height:52px;border:1px solid #6fa098;border-radius:5px;background:#a7b1b0"></div><svg class="ic" style="left:356px;top:614.5px;width:30px;height:30px;fill:#00463e;" viewBox="0 0 24 24"><path d="M6.620 10.790c1.440 2.830 3.760 5.140 6.590 6.590l2.200-2.200c.270-.270.670-.360 1.020-.240 1.120.370 2.330.570 3.570.570.550 0 1 .450 1 1V20c0 .550-.450 1-1 1-9.390 0-17-7.610-17-17 0-.550.450-1 1-1h3.500c.550 0 1 .450 1 1 0 1.250.200 2.450.570 3.570.110.350.030.740-.250 1.020l-2.200 2.200z"/></svg><div class="abs" style="left:325px;top:677px;width:919px;height:1px;background:#a2a2a2"></div><span id="t45" class="t" style="left:422px;top:604.1px;font-size:17.5px;line-height:21.0px;color:#333;">+1 121 333 4455</span><span id="t46" class="t" style="left:422px;top:633.3px;font-size:17.5px;line-height:21.0px;color:#747474;">Phone</span><div class="abs" style="left:345px;top:700px;width:52px;height:52px;border:1px solid #6fa098;border-radius:5px;background:#a7b1b0"></div><svg class="ic" style="left:356px;top:710.5px;width:30px;height:30px;fill:#00463e;" viewBox="0 0 24 24"><path d="M20 4H4c-1.100 0-1.990.9-1.990 2L2 18c0 1.100.9 2 2 2h16c1.100 0 2-.9 2-2V6c0-1.100-.9-2-2-2zm0 14H4V8l8 5 8-5v10zm-8-7L4 6h16l-8 5z"/></svg><span id="t47" class="t" style="left:422px;top:700.1px;font-size:17.5px;line-height:21.0px;color:#333;">office.a@company.com</span><span id="t48" class="t" style="left:422px;top:729.3px;font-size:17.5px;line-height:21.0px;color:#747474;">Email</span>
</div>
<div class="abs" style="left:313px;top:748px;width:940px;height:20px;overflow:hidden"><div style="margin:-20px 12px 0;height:20px;border-radius:9px;box-shadow:0 3px 7px rgba(0,0,0,.45)"></div></div>
<!-- right card (floor plan) -->
<div class="abs" style="left:1255px;top:230px;width:653px;height:785px;background:#aeaeae;border-radius:9px;box-shadow:0 2px 6px rgba(0,0,0,.35)"></div>

<svg class="abs" style="left:1330px;top:650px" width="500" height="350" viewBox="1330 650 500 350">
<g stroke="#767676" stroke-width="2.600" fill="none"><path d="M1362 650V984M1799 650V984"/></g>
<g stroke="#0a0a0a" stroke-width="2.300" fill="none" stroke-linecap="butt">
<path d="M1362 650V692M1362 731V739M1362 778V809M1362 842V848M1362 908V985M1361 984H1800M1799 650V692M1799 732V740M1799 778V809M1799 842V848M1799 872V878M1799 929V936M1799 968V985"/>
<path d="M1453.500 650V694M1453.500 711.700V811.500M1453.500 829.500V926M1453.500 945.500V984"/>
<path d="M1362 674H1453.500M1362 796H1453.500M1362 909H1453.500"/>
<path d="M1707.500 650V697.500M1707.500 715.500V856M1707.500 958V984"/>
<path d="M1707.500 681.500H1799M1707.500 796H1799"/>
</g>
<g stroke="#333" stroke-width=".9" fill="none"><path d="M1453.500 694H1437A17 17 0 0 0 1453.500 711.700M1453.500 811.500H1437A17.500 17.500 0 0 0 1453.500 829.500M1453.500 926H1437A18.500 18.500 0 0 0 1453.500 945.500M1707.500 697.500H1724A17.500 17.500 0 0 1 1707.500 715.500"/></g>
<g fill="#8b8b8b" stroke="#4a4a4a" stroke-width=".8">
<rect x="1404" y="724" width="23" height="56"/><rect x="1380" y="762" width="24" height="18"/>
<rect x="1735" y="730" width="22" height="56"/><rect x="1757" y="768" width="24" height="18"/>
<rect x="1404" y="845" width="23" height="20"/>
<rect x="1369" y="964" width="23" height="19"/><rect x="1369" y="916" width="23" height="14"/>
<rect x="1709" y="966" width="52" height="17"/><rect x="1769" y="964" width="24" height="19"/>
<rect x="1569" y="786" width="15" height="66"/><rect x="1586" y="786" width="48" height="18"/><rect x="1586" y="804" width="12" height="46"/>
<rect x="1536" y="836" width="48" height="16"/>
<rect x="1569" y="854" width="15" height="64"/><rect x="1586" y="854" width="48" height="18"/><rect x="1586" y="872" width="12" height="46"/>
<rect x="1536" y="902" width="48" height="16"/>
</g>
<g fill="#a4a4a4" stroke="#444" stroke-width="1">
<ellipse cx="1393" cy="750" rx="9" ry="8"/><ellipse cx="1768" cy="755" rx="9" ry="8"/>
<ellipse cx="1548" cy="820" rx="8" ry="8"/><ellipse cx="1621" cy="818" rx="8" ry="8"/><ellipse cx="1548" cy="887" rx="8" ry="8"/><ellipse cx="1621" cy="885" rx="8" ry="8"/>
<rect x="1724" y="816" width="30" height="30" rx="6"/><rect x="1750" y="877" width="30" height="30" rx="6"/>
<rect x="1734" y="809" width="10" height="5"/><rect x="1734" y="848" width="10" height="5"/><rect x="1717" y="826" width="5" height="10"/><rect x="1756" y="826" width="5" height="10"/>
<rect x="1760" y="870" width="10" height="5"/><rect x="1760" y="909" width="10" height="5"/><rect x="1743" y="887" width="5" height="10"/><rect x="1782" y="887" width="5" height="10"/>
</g>
<g stroke="#0a0a0a" stroke-width="3" fill="none" stroke-linecap="square">
<path d="M1585 784.500V919M1536 784.500H1636M1533 852.500H1636M1533 919H1633M1636 784.500V806M1636 852.500V873M1533 831V852.500M1533 898V919"/>
</g>
<g stroke="#222" stroke-width="1.300">
<path d="M1781 800v22M1770 811h22M1773 803l16 16M1789 803l-16 16M1777 801l8 20M1785 801l-8 20M1771 807l20 8M1771 815l20-8"/>
<path d="M1469 956v22M1458 967h22M1461 959l16 16M1477 959l-16 16M1465 957l8 20M1473 957l-8 20M1459 963l20 8M1459 971l20-8"/>
</g>
<circle cx="1585.500" cy="737.500" r="30.500" fill="#9eaaa8"/><circle cx="1585.500" cy="737.500" r="25.200" fill="#87a09b"/><circle cx="1585.500" cy="737.500" r="20.700" fill="#00463e"/>
<path d="M1579 747.500h13.500a4.500 4.500 0 0 0 1.500-8.700a6 6 0 0 0-3.500-5.300a7 7 0 0 0-11.500 2a6 6 0 0 0 0 12zM1591 733.500a5.500 5.500 0 1 1 4 5" fill="none" stroke="#2a8575" stroke-width="1"/><text x="1580.300" y="745.300" font-family="Liberation Sans, sans-serif" font-weight="700" font-size="6.500" fill="#2a8575">AQI</text>
<text x="1380" y="946" font-family="Liberation Sans, sans-serif" font-weight="700" font-size="10" fill="#1a1a1a" opacity=".75" textLength="58">TECHNICAL</text>
<text x="1394" y="958" font-family="Liberation Sans, sans-serif" font-weight="700" font-size="10" fill="#1a1a1a" opacity=".75" textLength="31">ROOM</text>
<circle cx="1410" cy="934.500" r="30.500" fill="#9eaaa8" opacity=".6"/><circle cx="1410" cy="934.500" r="25.200" fill="#87a09b" opacity=".6"/><circle cx="1410" cy="934.500" r="20.700" fill="#00463e"/>
<path d="M1412.500 926.500l-4.500 8h4l-3.500 8M1401 938a9.500 9.500 0 0 1 15.500-10.500M1419 932a9.500 9.500 0 0 1-15.500 9.500M1404 941.500l-2.500 3.500M1398.500 933l3 1" fill="none" stroke="#2a8575" stroke-width="1"/>
<text x="1728.500" y="938.500" font-family="Liberation Sans, sans-serif" font-weight="700" font-size="10.500" fill="#1a1a1a" textLength="44.500" lengthAdjust="spacingAndGlyphs">KITCHEN</text>
</svg>
<div class="abs" style="left:1463.500px;top:666px;width:245px;height:39.500px;border:2.500px solid #00463e;border-radius:12px;background:#aeaeae"></div>
<span id="t49" class="t" style="left:1480px;top:676.6px;font-size:17.5px;line-height:21.0px;color:#0c0c0c;font-weight:700;letter-spacing:0.007px;">Indoor Air Quality Sensor</span>
<div class="abs" style="left:1340px;top:864px;width:142px;height:39.500px;border:2.500px solid #00463e;border-radius:12px;background:#aeaeae"></div>
<span id="t50" class="t" style="left:1357px;top:874.6px;font-size:17.5px;line-height:21.0px;color:#0c0c0c;font-weight:700;letter-spacing:-0.198px;">Energy Meter</span>

<!-- timewindow panel (dimmed) -->
<div class="abs" style="left:1265px;top:125.700px;width:563px;height:536.300px;background:#aeaeae;border-radius:5px;box-shadow:0 3px 6px -1px rgba(0,0,0,.3),0 6px 14px 1px rgba(0,0,0,.2),0 2px 20px 2px rgba(0,0,0,.16)"></div>
<div class="abs" style="left:1286.500px;top:146px;width:471.500px;height:40px;border-radius:20px;background:#a3a3a3"></div>
<div class="abs" style="left:1288px;top:148.500px;width:233px;height:35.500px;border-radius:18px;background:#00463e"></div>
<span id="t51" class="t" style="left:1369px;top:157.1px;font-size:17.5px;line-height:21.0px;color:#aeaeae;letter-spacing:0.117px;-webkit-text-stroke:0.49px #aeaeae;">Realtime</span>
<span id="t52" class="t" style="left:1610px;top:156.6px;font-size:17.5px;line-height:21.0px;color:#7a7a7a;letter-spacing:0.221px;-webkit-text-stroke:0.49px #7a7a7a;">History</span>
<svg class="ic" style="left:1777px;top:151px;width:30px;height:30px;fill:#4a4a4a;" viewBox="0 0 24 24"><path d="M19.140 12.940c.040-.300.060-.610.060-.940 0-.320-.020-.640-.070-.940l2.030-1.580c.180-.140.230-.410.120-.610l-1.920-3.320c-.120-.220-.370-.290-.590-.220l-2.390.960c-.500-.380-1.030-.700-1.620-.940l-.360-2.540c-.040-.240-.240-.410-.480-.410h-3.840c-.240 0-.430.170-.470.410l-.360 2.540c-.590.240-1.130.570-1.620.940l-2.390-.960c-.220-.080-.470 0-.590.220L2.740 8.870c-.120.210-.080.470.120.610l2.030 1.580c-.050.300-.090.630-.090.940s.020.640.070.940l-2.030 1.580c-.180.140-.230.410-.120.610l1.920 3.320c.120.220.370.290.590.220l2.390-.960c.500.380 1.030.700 1.620.940l.360 2.540c.050.240.240.410.480.410h3.840c.240 0 .440-.170.470-.410l.360-2.540c.590-.240 1.130-.560 1.620-.940l2.390.960c.220.080.470 0 .590-.220l1.920-3.320c.120-.220.070-.470-.120-.610l-2.010-1.580zM12 15.600c-1.980 0-3.600-1.620-3.600-3.600s1.620-3.600 3.600-3.600 3.600 1.620 3.600 3.600-1.620 3.600-3.600 3.600z"/></svg>
<div class="abs" style="left:1286.500px;top:205.800px;width:521px;height:187.700px;border:1px solid #9a9a9a;border-radius:7px"></div>
<span id="t53" class="t" style="left:1307px;top:227.13px;font-size:20px;line-height:24.0px;color:#0c0c0c;letter-spacing:0.276px;-webkit-text-stroke:0.56px #0c0c0c;">Time window</span>
<div class="abs" style="left:1307px;top:261px;width:164px;height:39.500px;border-radius:20px;background:#a3a3a3"></div>
<div class="abs" style="left:1308px;top:263.300px;width:67px;height:35.800px;border-radius:18px;border:1px solid #00463e;background:#a7abaa"></div>
<span id="t54" class="t" style="left:1326px;top:271.2px;font-size:17.5px;line-height:21.0px;color:#00463e;letter-spacing:-0.27px;-webkit-text-stroke:0.49px #00463e;">Last</span>
<span id="t55" class="t" style="left:1390.5px;top:271.1px;font-size:17.5px;line-height:21.0px;color:#7a7a7a;letter-spacing:-0.029px;">Relative</span>
<div class="abs" style="left:1655px;top:256.500px;width:132px;height:44px;border:1px solid #9a9a9a;border-radius:5px"></div>
<span id="t56" class="t" style="left:1674.5px;top:268.6px;font-size:17.5px;line-height:21.0px;color:#00463e;letter-spacing:0.224px;-webkit-text-stroke:0.49px #00463e;">UTC+02:00</span>
<div class="abs" style="left:1307px;top:320.800px;width:480px;height:51.700px;border:1px solid #9a9a9a;border-radius:5px"></div>
<span id="t57" class="t" style="left:1321px;top:336.6px;font-size:17.5px;line-height:21.0px;color:#151515;letter-spacing:0.359px;">1 minute</span>
<svg class="ic" style="left:1750px;top:333px;width:30px;height:30px;fill:#4f4f4f;" viewBox="0 0 24 24"><path d="M7 10l5 5 5-5z"/></svg>
<div class="abs" style="left:1286.500px;top:414.300px;width:521px;height:70.700px;border:1px solid #9a9a9a;border-radius:7px"></div>
<span id="t58" class="t" style="left:1307px;top:437.13px;font-size:20px;line-height:24.0px;color:#151515;letter-spacing:0.102px;">Aggregation</span>
<div class="abs" style="left:1551px;top:423.800px;width:236px;height:51px;border:1px solid #9a9a9a;border-radius:5px"></div>
<span id="t59" class="t" style="left:1566px;top:439.6px;font-size:17.5px;line-height:21.0px;color:#151515;letter-spacing:0.161px;">Average</span>
<svg class="ic" style="left:1750px;top:435px;width:30px;height:30px;fill:#4f4f4f;" viewBox="0 0 24 24"><path d="M7 10l5 5 5-5z"/></svg>
<div class="abs" style="left:1286.500px;top:505.200px;width:521px;height:70.800px;border:1px solid #9a9a9a;border-radius:7px"></div>
<span id="t60" class="t" style="left:1307px;top:528.13px;font-size:20px;line-height:24.0px;color:#151515;letter-spacing:0.04px;">Grouping interval</span>
<div class="abs" style="left:1551px;top:515px;width:236px;height:51px;border:1px solid #9a9a9a;border-radius:5px"></div>
<span id="t61" class="t" style="left:1566px;top:530.6px;font-size:17.5px;line-height:21.0px;color:#151515;letter-spacing:0.448px;">10 seconds</span>
<svg class="ic" style="left:1750px;top:526px;width:30px;height:30px;fill:#4f4f4f;" viewBox="0 0 24 24"><path d="M7 10l5 5 5-5z"/></svg>
<div class="abs" style="left:1265px;top:596px;width:563px;height:1px;background:#9e9e9e"></div>
<span id="t62" class="t" style="left:1640px;top:618.6px;font-size:17.5px;line-height:21.0px;color:#0a0a0a;letter-spacing:0.419px;-webkit-text-stroke:0.49px #0a0a0a;">Cancel</span>
<div class="abs" style="left:1718px;top:607px;width:100px;height:45px;border-radius:5px;background:#9c9c9c"></div>
<span id="t63" class="t" style="left:1738px;top:618.6px;font-size:17.5px;line-height:21.0px;color:#7c7c7c;letter-spacing:0.427px;-webkit-text-stroke:0.49px #7c7c7c;">Update</span>

<!-- Time window settings dialog -->
<div class="abs" style="left:585px;top:189px;width:750px;height:702px;background:#fff;border-radius:5px;box-shadow:0 14px 19px -9px rgba(0,0,0,.2),0 30px 47px 4px rgba(0,0,0,.14),0 11px 57px 10px rgba(0,0,0,.12);overflow:hidden">
<div class="abs" style="left:0;top:0;width:750px;height:79.500px;background:#00695c"></div>
<div class="abs" style="left:20px;top:100px;width:710px;height:39px;border-radius:20px;background:#f0f0f0"></div>
<div class="abs" style="left:22px;top:102px;width:352px;height:35px;border-radius:18px;background:#00695c"></div>
<div class="abs" style="left:743px;top:140px;width:7px;height:231px;background:#dcdede"></div>
<div class="abs" style="left:20px;top:160px;width:703px;height:312px;border-radius:8px;background:#f8f9f9;box-shadow:0 0 3px rgba(0,0,0,.05)"></div>
<div class="abs" style="left:40px;top:230px;width:662px;height:71px;border:1px solid #e0e0e0;border-radius:6px;background:#fff"></div>
<div class="abs" style="left:40px;top:324px;width:661px;height:35px;border:1.300px solid #00695c;border-radius:18px;background:#eff3f2"></div>
<div class="abs" style="left:40px;top:381px;width:662px;height:70px;border:1px solid #e0e0e0;border-radius:6px;background:#fff"></div>
<div class="abs" style="left:20px;top:492px;width:703px;height:160px;border-radius:8px;background:#f8f9f9;box-shadow:0 0 3px rgba(0,0,0,.05)"></div>
<div class="abs" style="left:40px;top:562px;width:662px;height:71px;border:1px solid #e0e0e0;border-radius:6px;background:#fff"></div>
<div class="abs" style="left:600px;top:572px;width:92px;height:51px;border:1px solid #e0e0e0;border-radius:6px;background:#fff"></div>
<div class="abs" style="left:0;top:634.500px;width:750px;height:67px;background:#fff;border-top:1px solid #e3e3e3"></div>
<div class="abs" style="left:653px;top:647px;width:87px;height:44px;border-radius:5px;background:#00695c"></div>
</div>
<span id="t64" class="t" style="left:605px;top:212.99px;font-size:25px;line-height:30.0px;color:#fff;letter-spacing:0.647px;-webkit-text-stroke:0.7px #fff;">Time window settings</span>
<svg class="ic" style="left:1280px;top:214px;width:30px;height:30px;fill:#fff;" viewBox="0 0 24 24"><path d="M19 6.410L17.590 5 12 10.590 6.410 5 5 6.410 10.590 12 5 17.590 6.410 19 12 13.410 17.590 19 19 17.590 13.410 12z"/></svg>
<svg class="ic" style="left:1239.5px;top:592px;width:28px;height:28px;fill:#7a7a7a;" viewBox="0 0 24 24"><path d="M3 17.250V21h3.750L17.810 9.940l-3.750-3.750L3 17.250zM20.710 7.040c.390-.390.390-1.020 0-1.410l-2.340-2.340c-.390-.390-1.020-.390-1.410 0l-1.830 1.830 3.750 3.750 1.830-1.830z"/></svg>
<svg class="ic" style="left:1239.5px;top:773px;width:28px;height:28px;fill:#7a7a7a;" viewBox="0 0 24 24"><path d="M3 17.250V21h3.750L17.810 9.940l-3.750-3.750L3 17.250zM20.710 7.040c.390-.390.390-1.020 0-1.410l-2.340-2.340c-.390-.390-1.020-.390-1.410 0l-1.830 1.830 3.750 3.750 1.830-1.830z"/></svg>
<span id="t65" class="t" style="left:1259px;top:848.6px;font-size:17.5px;line-height:21.0px;color:#fff;letter-spacing:0.244px;-webkit-text-stroke:0.49px #fff;">Apply</span>
<!-- highlight around pencil button -->
<div class="abs" style="left:1215px;top:578px;width:66px;height:54.500px;border:3px solid #fbc338;border-radius:9px;box-shadow:0 0 6px rgba(251,195,56,.7),inset 0 0 6px rgba(251,195,56,.45)"></div>

<!-- Edit intervals list popover -->
<div class="abs" style="left:475px;top:290px;width:755.500px;height:631px;background:#fff;border:3px solid #fbc338;border-radius:10px;box-shadow:0 0 7px rgba(251,195,56,.75),inset 0 0 7px rgba(251,195,56,.55),0 6px 16px rgba(0,0,0,.25)"></div>
<span id="t66" class="t" style="left:498.7px;top:312.63px;font-size:20px;line-height:24.0px;color:#1b1b1b;letter-spacing:0.342px;-webkit-text-stroke:0.56px #1b1b1b;">Edit intervals list</span>
<svg class="abs" style="left:1191px;top:313px" width="21" height="21" viewBox="0 0 21 21"><path d="M3.500 3.500L17.500 17.500M17.500 3.500L3.500 17.500" stroke="#757575" stroke-width="3.600" fill="none"/></svg>
<div class="abs" style="left:498px;top:357.500px;width:710px;height:79.500px;border-radius:6px;background:#f4f7f8"></div>
<span id="t67" class="t" style="left:518.2px;top:374.47px;font-size:15px;line-height:18.0px;color:#757575;letter-spacing:0.543px;">List of available interval options can be specified. It is possible to configure the grouping</span>
<span id="t68" class="t" style="left:518.2px;top:399.47px;font-size:15px;line-height:18.0px;color:#757575;letter-spacing:0.544px;">intervals list and default grouping interval.</span>
<div class="abs" style="left:498px;top:457.500px;width:710px;height:375.800px;border:1px solid #e0e0e0;border-radius:7px"></div>
<div class="abs" style="left:499px;top:517px;width:708px;height:1px;background:#e0e0e0"></div>
<div class="abs" style="left:527.500px;top:475.500px;width:23.500px;height:23px;border-radius:2.500px;background:#f44336"></div>
<div class="abs" style="left:530px;top:486.600px;width:19px;height:2.400px;background:#fff"></div>
<span id="t69" class="t" style="left:569.2px;top:477.1px;font-size:17.5px;line-height:21.0px;color:#757575;letter-spacing:0.201px;">Interval</span>
<span id="t70" class="t" style="left:724.2px;top:478.1px;font-size:17.5px;line-height:21.0px;color:#757575;letter-spacing:0.193px;">Grouping intervals</span>
<span id="t71" class="t" style="left:965.5px;top:478.1px;font-size:17.5px;line-height:21.0px;color:#757575;letter-spacing:0.272px;">Default grouping interval</span>
<div class="abs" style="left:499px;top:532.500px;width:708px;height:284.500px;overflow:hidden">
<div class="abs" style="left:-499px;top:-532.500px;width:1920px;height:1080px">
<div class="abs" style="left:527.500px;top:540.2px;width:23px;height:23px;border:2.500px solid #6b6b6b;border-radius:3px"></div><span id="t72" class="t" style="left:569.5px;top:542.1px;font-size:17.5px;line-height:21.0px;color:#212121;letter-spacing:0.035px;">Current week</span><span id="t73" class="t" style="left:680.7px;top:542.1px;font-size:17.5px;line-height:21.0px;color:#212121;letter-spacing:-1.198px;">...</span><div class="abs" style="left:716px;top:526.0px;width:225px;height:50.500px;border:1px solid #e4e4e4;border-radius:5.500px"></div><span id="t74" class="t" style="left:730.5px;top:541.7px;font-size:17.5px;line-height:21.0px;color:#a3a3a3;letter-spacing:1.349px;">All</span><svg class="ic" style="left:903.8px;top:537.0px;width:30px;height:30px;fill:#8e8e8e;" viewBox="0 0 24 24"><path d="M7 10l5 5 5-5z"/></svg><div class="abs" style="left:951px;top:526.0px;width:234.500px;height:50.500px;border:1px solid #e4e4e4;border-radius:5.500px"></div><span id="t75" class="t" style="left:965.7px;top:541.7px;font-size:17.5px;line-height:21.0px;color:#7d7d7d;letter-spacing:0.073px;">Set</span><svg class="ic" style="left:1148px;top:537.0px;width:30px;height:30px;fill:#8e8e8e;" viewBox="0 0 24 24"><path d="M7 10l5 5 5-5z"/></svg><div class="abs" style="left:527.500px;top:605.7px;width:23px;height:23px;border-radius:3px;background:#00695c"></div><svg class="abs" style="left:527.500px;top:605.7px" width="23" height="23" viewBox="0 0 24 24"><path d="M4.100 12.700l5.300 5.300L20.300 7.100" stroke="#fff" stroke-width="2.700" fill="none"/></svg><span id="t76" class="t" style="left:569.5px;top:607.6px;font-size:17.5px;line-height:21.0px;color:#212121;letter-spacing:0.28px;">Current month</span><div class="abs" style="left:716px;top:591.5px;width:225px;height:50.500px;border:1px solid #d6d6d6;border-radius:5.500px"></div><span id="t77" class="t" style="left:730.5px;top:607.2px;font-size:17.5px;line-height:21.0px;color:#212121;letter-spacing:0.446px;">2 hours</span><svg class="ic" style="left:903.8px;top:602.5px;width:30px;height:30px;fill:#757575;" viewBox="0 0 24 24"><path d="M7 10l5 5 5-5z"/></svg><div class="abs" style="left:951px;top:591.5px;width:234.500px;height:50.500px;border:1px solid #d6d6d6;border-radius:5.500px"></div><span id="t78" class="t" style="left:965.7px;top:607.2px;font-size:17.5px;line-height:21.0px;color:#212121;letter-spacing:0.446px;">2 hours</span><svg class="ic" style="left:1148px;top:602.5px;width:30px;height:30px;fill:#757575;" viewBox="0 0 24 24"><path d="M7 10l5 5 5-5z"/></svg><div class="abs" style="left:527.500px;top:671.2px;width:23px;height:23px;border:2.500px solid #6b6b6b;border-radius:3px"></div><span id="t79" class="t" style="left:569.5px;top:673.1px;font-size:17.5px;line-height:21.0px;color:#212121;letter-spacing:0.28px;">Current month</span><span id="t80" class="t" style="left:686.2px;top:673.1px;font-size:17.5px;line-height:21.0px;color:#212121;letter-spacing:-1.198px;">...</span><div class="abs" style="left:716px;top:657.0px;width:225px;height:50.500px;border:1px solid #e4e4e4;border-radius:5.500px"></div><span id="t81" class="t" style="left:730.5px;top:672.7px;font-size:17.5px;line-height:21.0px;color:#a3a3a3;letter-spacing:1.349px;">All</span><svg class="ic" style="left:903.8px;top:668.0px;width:30px;height:30px;fill:#8e8e8e;" viewBox="0 0 24 24"><path d="M7 10l5 5 5-5z"/></svg><div class="abs" style="left:951px;top:657.0px;width:234.500px;height:50.500px;border:1px solid #e4e4e4;border-radius:5.500px"></div><span id="t82" class="t" style="left:965.7px;top:672.7px;font-size:17.5px;line-height:21.0px;color:#7d7d7d;letter-spacing:0.073px;">Set</span><svg class="ic" style="left:1148px;top:668.0px;width:30px;height:30px;fill:#8e8e8e;" viewBox="0 0 24 24"><path d="M7 10l5 5 5-5z"/></svg><div class="abs" style="left:527.500px;top:736.7px;width:23px;height:23px;border:2.500px solid #6b6b6b;border-radius:3px"></div><span id="t83" class="t" style="left:569.5px;top:738.6px;font-size:17.5px;line-height:21.0px;color:#212121;letter-spacing:0.222px;">Current quarter</span><div class="abs" style="left:716px;top:722.5px;width:225px;height:50.500px;border:1px solid #e4e4e4;border-radius:5.500px"></div><span id="t84" class="t" style="left:730.5px;top:738.2px;font-size:17.5px;line-height:21.0px;color:#a3a3a3;letter-spacing:1.349px;">All</span><svg class="ic" style="left:903.8px;top:733.5px;width:30px;height:30px;fill:#8e8e8e;" viewBox="0 0 24 24"><path d="M7 10l5 5 5-5z"/></svg><div class="abs" style="left:951px;top:722.5px;width:234.500px;height:50.500px;border:1px solid #e4e4e4;border-radius:5.500px"></div><span id="t85" class="t" style="left:965.7px;top:738.2px;font-size:17.5px;line-height:21.0px;color:#7d7d7d;letter-spacing:0.073px;">Set</span><svg class="ic" style="left:1148px;top:733.5px;width:30px;height:30px;fill:#8e8e8e;" viewBox="0 0 24 24"><path d="M7 10l5 5 5-5z"/></svg><div class="abs" style="left:527.500px;top:802.2px;width:23px;height:23px;border:2.500px solid #6b6b6b;border-radius:3px"></div><span id="t86" class="t" style="left:569.5px;top:804.1px;font-size:17.5px;line-height:21.0px;color:#212121;letter-spacing:0.19px;">Current quarte</span><span id="t87" class="t" style="left:686.2px;top:804.1px;font-size:17.5px;line-height:21.0px;color:#212121;letter-spacing:-1.198px;">...</span><div class="abs" style="left:716px;top:788.0px;width:225px;height:50.500px;border:1px solid #e4e4e4;border-radius:5.500px"></div><span id="t88" class="t" style="left:730.5px;top:803.7px;font-size:17.5px;line-height:21.0px;color:#a3a3a3;letter-spacing:1.349px;">All</span><svg class="ic" style="left:903.8px;top:799.0px;width:30px;height:30px;fill:#8e8e8e;" viewBox="0 0 24 24"><path d="M7 10l5 5 5-5z"/></svg><div class="abs" style="left:951px;top:788.0px;width:234.500px;height:50.500px;border:1px solid #e4e4e4;border-radius:5.500px"></div><span id="t89" class="t" style="left:965.7px;top:803.7px;font-size:17.5px;line-height:21.0px;color:#7d7d7d;letter-spacing:0.073px;">Set</span><svg class="ic" style="left:1148px;top:799.0px;width:30px;height:30px;fill:#8e8e8e;" viewBox="0 0 24 24"><path d="M7 10l5 5 5-5z"/></svg>
</div></div>
<div class="abs" style="left:1200px;top:650px;width:7px;height:80px;background:#cfcfcf"></div>
<span id="t90" class="t" style="left:514.7px;top:865.6px;font-size:17.5px;line-height:21.0px;color:#00695c;letter-spacing:0.256px;-webkit-text-stroke:0.49px #00695c;">Reset</span>
<span id="t91" class="t" style="left:1043px;top:865.6px;font-size:17.5px;line-height:21.0px;color:#0a0a0a;letter-spacing:0.336px;-webkit-text-stroke:0.49px #0a0a0a;">Cancel</span>
<div class="abs" style="left:1122.300px;top:853px;width:85.700px;height:44.800px;border-radius:5px;background:#00695c"></div>
<span id="t92" class="t" style="left:1141.5px;top:865.6px;font-size:17.5px;line-height:21.0px;color:#fff;letter-spacing:0.544px;-webkit-text-stroke:0.49px #fff;">Apply</span>
<!-- highlight frames -->
<div class="abs" style="left:507px;top:588px;width:681.500px;height:58px;border:3px solid #fbc338;border-radius:9px;box-shadow:0 0 6px rgba(251,195,56,.7),inset 0 0 6px rgba(251,195,56,.45)"></div>
<div class="abs" style="left:1119px;top:850px;width:92px;height:51px;border:3px solid #fbc338;border-radius:9px;box-shadow:0 0 6px rgba(251,195,56,.7),inset 0 0 5px rgba(251,195,56,.45)"></div>

<!-- tutorial annotations -->
<svg class="abs" style="left:0;top:0;pointer-events:none" width="1920" height="1080" viewBox="0 0 1920 1080">
<path d="M455 617.700H464M468.800 617.700H490M495 617.700H508" stroke="#fbc338" stroke-width="3.100" fill="none"/>
<circle cx="508.800" cy="617.900" r="5.200" fill="#fbc338"/>
<path d="M1209 877.500H1223M1230.600 877.500H1248.700M1253.700 877.500H1264" stroke="#fbc338" stroke-width="3.100" fill="none"/>
<circle cx="1209" cy="877.500" r="5.200" fill="#fbc338"/>
<polygon points="1230,599 1237,606 1230,613" fill="#fff"/>
</svg>
<div class="abs" style="left:33px;top:568px;width:423px;height:109px;background:#fdf1e1;border:3px solid #fbc338;border-radius:9px;box-shadow:0 0 4px rgba(251,195,56,.35)"></div>
<div class="abs" style="left:55px;top:536px;width:30px;height:35.500px;background:#fff;border:3px solid #fbc338;border-radius:9px"></div>
<span id="t93" class="t" style="left:63px;top:539.28px;font-size:24.5px;line-height:29.4px;color:#000;letter-spacing:-0.041px;">8</span>
<span id="t94" class="t" style="left:41.5px;top:572.72px;font-size:28px;line-height:33.6px;color:#000;">Check &quot;Current month&quot; interval.</span>
<span id="t95" class="t" style="left:41.5px;top:606.42px;font-size:28px;line-height:33.6px;color:#000;">Set grouping interval and default</span>
<span id="t96" class="t" style="left:41.5px;top:639.92px;font-size:28px;line-height:33.6px;color:#000;">grouping interval to 2 hour</span>
<div class="abs" style="left:1262.500px;top:859.500px;width:172.500px;height:41.500px;background:#fdf1e1;border:3px solid #fbc338;border-radius:9px;box-shadow:0 0 4px rgba(251,195,56,.35)"></div>
<div class="abs" style="left:1277.500px;top:827.500px;width:30.500px;height:35.500px;background:#fff;border:3px solid #fbc338;border-radius:9px"></div>
<span id="t97" class="t" style="left:1285.5px;top:830.78px;font-size:24.5px;line-height:29.4px;color:#000;letter-spacing:-0.041px;">9</span>
<span id="t98" class="t" style="left:1271px;top:864.22px;font-size:28px;line-height:33.6px;color:#000;">Click &quot;Apply&quot;</span>

</body></html>
